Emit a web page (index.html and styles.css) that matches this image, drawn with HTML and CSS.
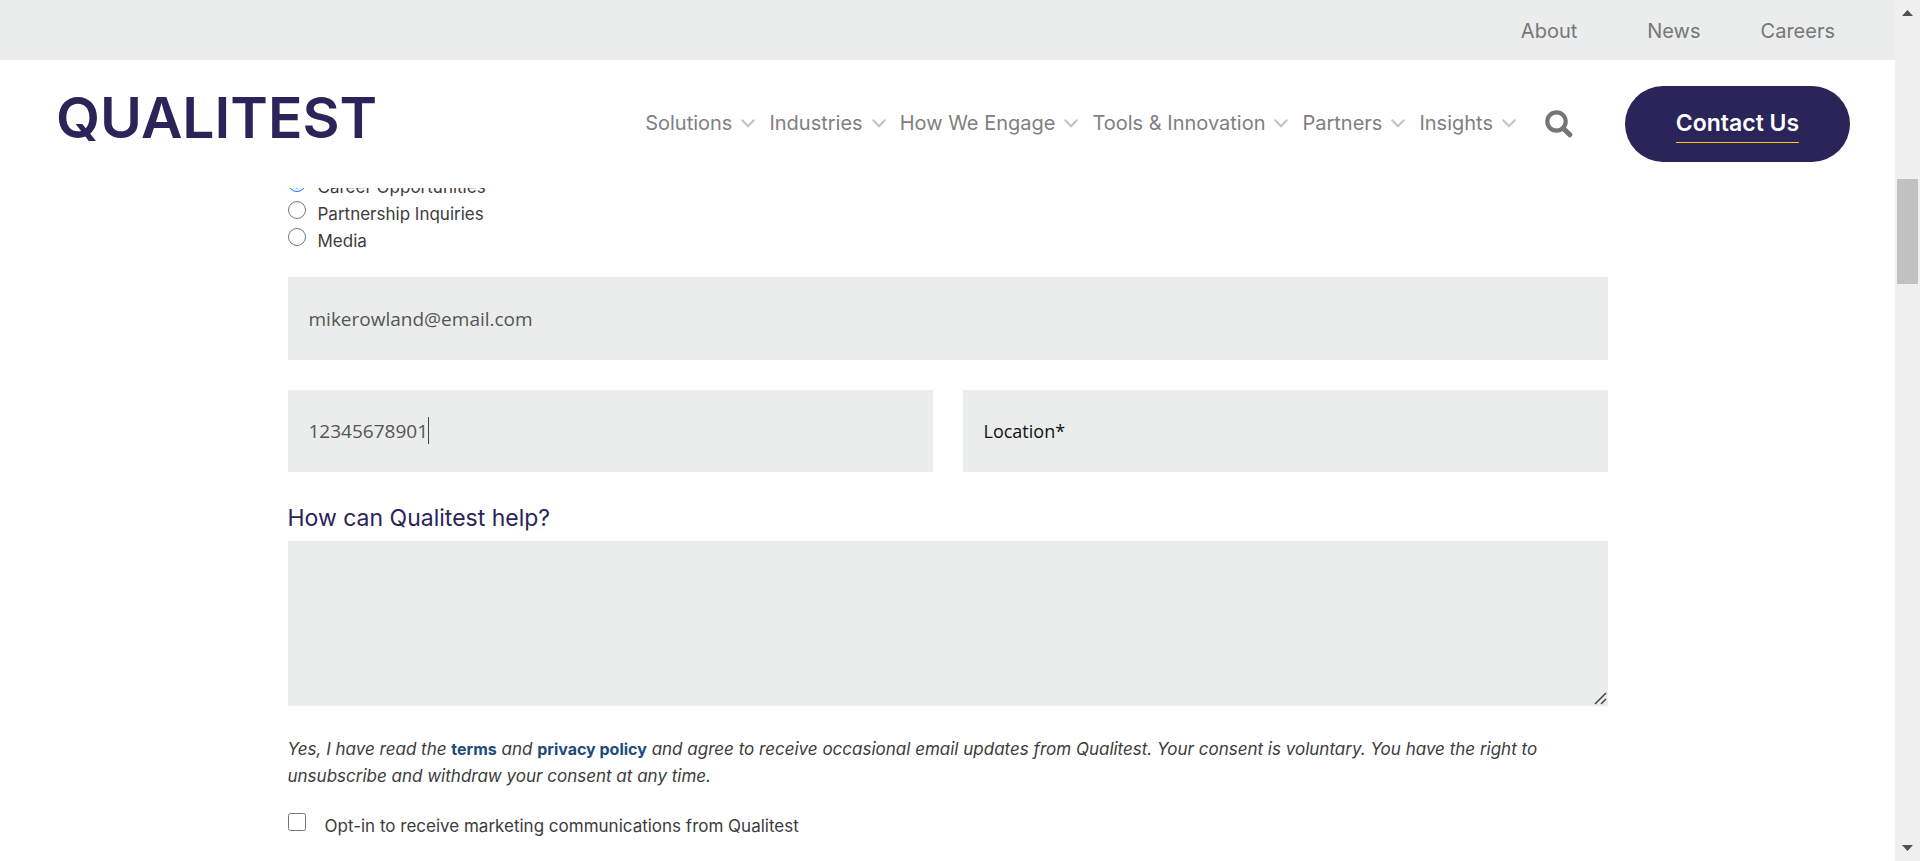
FILE: index.html
```html
<!DOCTYPE html>
<html lang="en">
<head>
<meta charset="utf-8">
<meta name="viewport" content="width=device-width, initial-scale=1">
<title>Contact Us | Qualitest</title>
<link rel="stylesheet" href="styles.css">
</head>
<body class="window">
<svg class="defs" width="0" height="0" aria-hidden="true">
  <symbol id="chevron" viewBox="0 0 14 9"><path d="M1.3 1.3 7 7.2l5.7-5.9" fill="none" stroke="currentColor" stroke-width="2.2" stroke-linecap="round"/></symbol>
</svg>
<div class="page">
  <header class="header">
    <nav class="topbar" aria-label="Company">
      <a class="topbar-link topbar-link-first" href="#about">About</a>
      <a class="topbar-link" href="#news">News</a>
      <a class="topbar-link" href="#careers">Careers</a>
    </nav>
    <div class="mainbar">
      <a class="logo" href="#home">QUALITEST</a>
      <nav class="menu" aria-label="Main">
        <a class="menu-link" href="#solutions">Solutions <svg class="chevron" aria-hidden="true"><use href="#chevron"/></svg></a>
        <a class="menu-link" href="#industries">Industries <svg class="chevron" aria-hidden="true"><use href="#chevron"/></svg></a>
        <a class="menu-link" href="#engage">How We Engage <svg class="chevron" aria-hidden="true"><use href="#chevron"/></svg></a>
        <a class="menu-link" href="#tools">Tools &amp; Innovation <svg class="chevron" aria-hidden="true"><use href="#chevron"/></svg></a>
        <a class="menu-link" href="#partners">Partners <svg class="chevron" aria-hidden="true"><use href="#chevron"/></svg></a>
        <a class="menu-link" href="#insights">Insights <svg class="chevron" aria-hidden="true"><use href="#chevron"/></svg></a>
      </nav>
      <button class="search" type="button" aria-label="Search">
        <svg class="search-icon" viewBox="0 0 28 28" aria-hidden="true"><circle cx="11.5" cy="11.5" r="9.2" fill="none" stroke="currentColor" stroke-width="4.2"/><path d="M18.2 18.2 24.8 24.8" stroke="currentColor" stroke-width="5" stroke-linecap="round"/></svg>
      </button>
      <a class="contact" href="#contact"><span class="contact-text">Contact Us</span></a>
    </div>
  </header>

  <main class="main">
    <form class="form">
      <div class="options">
        <label class="option"><input class="tick" type="radio" name="topic" checked> Career Opportunities</label>
        <label class="option"><input class="tick" type="radio" name="topic"> Partnership Inquiries</label>
        <label class="option"><input class="tick" type="radio" name="topic"> Media</label>
      </div>
      <div class="fields">
        <input class="field field-wide" type="email" aria-label="Email" value="mikerowland@email.com">
        <div class="field-box">
          <input class="field" type="tel" aria-label="Phone" value="12345678901">
          <span class="caret"></span>
        </div>
        <input class="field" type="text" aria-label="Location" placeholder="Location*">
      </div>
      <label class="question" for="help">How can Qualitest help?</label>
      <div class="message-box">
        <textarea class="message" id="help"></textarea>
        <svg class="grip" viewBox="0 0 13 13" aria-hidden="true"><path d="M1 12 12 1M7 12l5-5" stroke="#444" stroke-width="1.5"/></svg>
      </div>
      <p class="consent">Yes, I have read the <a class="consent-link" href="#terms">terms</a> and <a class="consent-link" href="#privacy">privacy policy</a> and agree to receive occasional email updates from Qualitest. Your consent is voluntary. You have the right to unsubscribe and withdraw your consent at any time.</p>
      <label class="option option-check"><input class="tick" type="checkbox"> Opt-in to receive marketing communications from Qualitest</label>
    </form>
  </main>
</div>
<div class="scrollbar" aria-hidden="true">
  <svg class="arrow" viewBox="0 0 11 6"><path d="M5.5 0 11 6H0z" fill="#505050"/></svg>
  <div class="track"><div class="thumb"></div></div>
  <svg class="arrow" viewBox="0 0 11 6"><path d="M0 0h11L5.5 6z" fill="#505050"/></svg>
</div>
</body>
</html>
```

FILE: styles.css
```css
* { box-sizing: border-box; }

.window {
  margin: 0;
  height: 100vh;
  display: grid;
  grid-template-columns: minmax(0, 1fr) 25px;
  overflow: hidden;
  background: #fff;
  color: #3c3c3c;
  font-family: Inter, "Liberation Sans", sans-serif;
  font-size: 17px;
  line-height: 27px;
}
.defs { position: absolute; }
.page { min-width: 0; overflow: hidden; }

.header { position: relative; z-index: 1; background: #fff; }
.topbar {
  display: flex;
  justify-content: flex-end;
  align-items: center;
  gap: 60px;
  height: 60px;
  padding: 2px 60px 0;
  background: #ebedec;
}
.topbar-link { color: #777; font-size: 20px; text-decoration: none; }
.topbar-link-first { margin-right: 10px; }

.mainbar {
  display: flex;
  align-items: center;
  height: 128px;
  padding: 0 45px 0 56px;
}
.logo {
  margin-right: auto;
  padding-bottom: 12px;
  color: #2b2458;
  font-size: 57px;
  font-weight: 600;
  line-height: 60px;
  text-decoration: none;
}
.menu { display: flex; gap: 14px; padding-bottom: 2px; }
.menu-link {
  display: flex;
  align-items: center;
  gap: 9px;
  color: #808080;
  font-size: 20px;
  text-decoration: none;
  white-space: nowrap;
}
.chevron { width: 14px; height: 9px; color: #c3c3cb; }
.search {
  margin: 0 52px 0 29px;
  padding: 0;
  border: 0;
  background: none;
  color: #757575;
}
.search-icon { display: block; width: 28px; height: 28px; }
.contact {
  display: flex;
  align-items: center;
  justify-content: center;
  width: 225px;
  height: 76px;
  padding-bottom: 2px;
  border-radius: 38px;
  background: #2b2458;
  color: #fff;
  font-size: 23px;
  font-weight: 600;
  line-height: 38px;
  text-decoration: none;
}
.contact-text { border-bottom: 1px solid #ffc815; }

/* The form is scrolled partly under the header. */
.main { margin-top: -14px; padding: 0 24px; }
.form { max-width: 1320px; margin: 0 auto; }
.option { display: flex; align-items: flex-start; gap: 12px; }
.option-check { gap: 19px; }
.tick { flex: none; width: 18px; height: 18px; margin: 0; }

.fields {
  display: grid;
  grid-template-columns: 1fr 1fr;
  gap: 30px;
  margin-top: 22px;
}
.field {
  display: block;
  width: 100%;
  height: 82px;
  padding: 0 21px;
  border: 0;
  border-radius: 0;
  background: #ebedec;
  color: #555;
  font-family: "Open Sans", "Noto Sans", sans-serif;
  font-size: 19px;
}
.field::placeholder { color: #111; font-size: 18px; opacity: 1; }
.field-wide { grid-column: 1 / -1; height: 83px; }
.field-box { position: relative; }
.caret {
  position: absolute;
  top: 27px;
  left: 140px;
  width: 1px;
  height: 27px;
  background: #444;
}

.question {
  display: block;
  margin-top: 33px;
  color: #2b2458;
  font-size: 23px;
}
.message-box { position: relative; margin-top: 9px; }
.message {
  display: block;
  width: 100%;
  height: 165px;
  padding: 20px;
  border: 0;
  background: #ebedec;
  resize: vertical;
}
.message::-webkit-resizer { background: transparent; }
.grip {
  position: absolute;
  right: 1px;
  bottom: 1px;
  width: 13px;
  height: 13px;
  pointer-events: none;
}
.consent { margin: 30px 0 23px; font-style: italic; }
.consent-link {
  color: #1d4b7c;
  font-size: 16px;
  font-style: normal;
  font-weight: 700;
  text-decoration: none;
}

.scrollbar {
  display: flex;
  flex-direction: column;
  align-items: center;
  gap: 8px;
  padding: 10px 2px;
  background: #f0f0f0;
}
.arrow { flex: none; width: 11px; height: 6px; }
.track { flex: 1; width: 21px; padding-top: 155px; }
.thumb { height: 105px; background: #c1c1c1; }
```
